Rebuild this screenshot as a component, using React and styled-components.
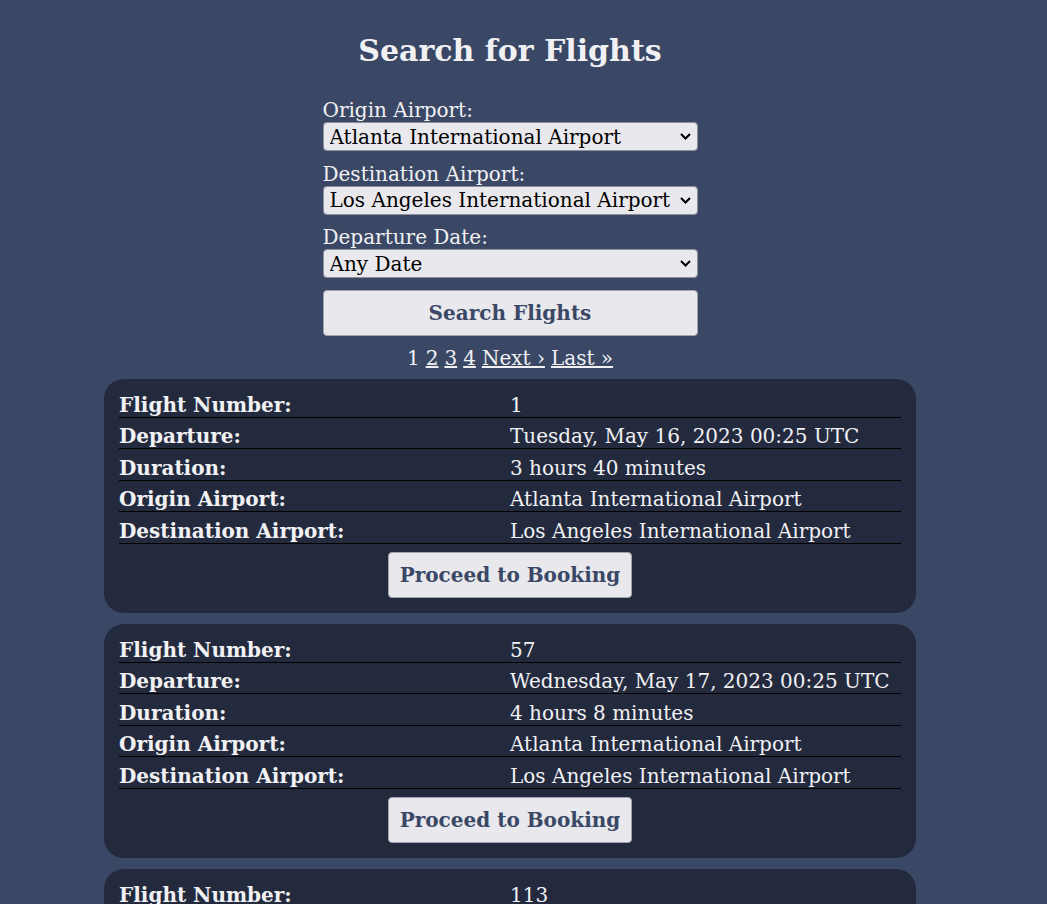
import React from 'react';
import styled, { createGlobalStyle } from 'styled-components';

const GlobalStyle = createGlobalStyle`
  html, body {
    margin: 0;
    background: #3a4866;
  }
  body {
    font-family: "DejaVu Serif", serif;
    color: #f1f1f4;
    font-size: 20px;
  }
`;

const flights = [
  {
    number: '1',
    departure: 'Tuesday, May 16, 2023 00:25 UTC',
    duration: '3 hours 40 minutes',
    origin: 'Atlanta International Airport',
    destination: 'Los Angeles International Airport',
  },
  {
    number: '57',
    departure: 'Wednesday, May 17, 2023 00:25 UTC',
    duration: '4 hours 8 minutes',
    origin: 'Atlanta International Airport',
    destination: 'Los Angeles International Airport',
  },
  {
    number: '113',
    departure: 'Thursday, May 18, 2023 00:25 UTC',
    duration: '3 hours 52 minutes',
    origin: 'Atlanta International Airport',
    destination: 'Los Angeles International Airport',
  },
];

function Dropdown({ value, label }) {
  return (
    <SelectWrap>
      <Select defaultValue={value}>
        <option value={value}>{label}</option>
      </Select>
      <Chevron width="11" height="7" viewBox="0 0 11 7">
        <path d="M1 1 L5.5 5.5 L10 1" fill="none" stroke="#000" strokeWidth="2" />
      </Chevron>
    </SelectWrap>
  );
}

function App() {
  return (
    <Page>
      <GlobalStyle />
      <Title>Search for Flights</Title>
      <Form>
        <Field>
          <Label>Origin Airport:</Label>
          <Dropdown value="atl" label="Atlanta International Airport" />
        </Field>
        <Field>
          <Label>Destination Airport:</Label>
          <Dropdown value="lax" label="Los Angeles International Airport" />
        </Field>
        <Field>
          <Label>Departure Date:</Label>
          <Dropdown value="any" label="Any Date" />
        </Field>
        <SearchButton>Search Flights</SearchButton>
      </Form>
      <Pager>
        <span>1</span>
        <PageLink href="#">2</PageLink>
        <PageLink href="#">3</PageLink>
        <PageLink href="#">4</PageLink>
        <PageLink href="#">Next ›</PageLink>
        <PageLink href="#">Last »</PageLink>
      </Pager>
      <List>
        {flights.map((f) => (
          <Card key={f.number}>
            <Rows>
              <Row><Key>Flight Number:</Key><Value>{f.number}</Value></Row>
              <Row><Key>Departure:</Key><Value>{f.departure}</Value></Row>
              <Row><Key>Duration:</Key><Value>{f.duration}</Value></Row>
              <Row><Key>Origin Airport:</Key><Value>{f.origin}</Value></Row>
              <Row><Key>Destination Airport:</Key><Value>{f.destination}</Value></Row>
            </Rows>
            <BookButton>Proceed to Booking</BookButton>
          </Card>
        ))}
      </List>
    </Page>
  );
}

const Page = styled.div`
  width: 1020px;
  display: flex;
  flex-direction: column;
  align-items: center;
  padding-top: 33px;
`;

const Title = styled.h1`
  margin: 0 0 30px;
  font-size: 30px;
  line-height: 36px;
  font-weight: bold;
`;

const Form = styled.div`
  width: 375px;
  display: flex;
  flex-direction: column;
  gap: 11.5px;
`;

const Field = styled.label`
  display: flex;
  flex-direction: column;
`;

const Label = styled.span`
  line-height: 23px;
`;

const SelectWrap = styled.div`
  position: relative;
  display: flex;
`;

const Select = styled.select`
  appearance: none;
  height: 29px;
  width: 375px;
  font-family: "DejaVu Serif", serif;
  font-size: 20px;
  color: #000;
  background-color: #e9e8ed;
  border: 1px solid #8f8f9b;
  border-radius: 4px;
  padding: 0 20px 0 6px;
`;

const Chevron = styled.svg`
  position: absolute;
  right: 7px;
  top: 11px;
  pointer-events: none;
`;

const SearchButton = styled.button`
  height: 46px;
  font-family: "DejaVu Serif", serif;
  font-size: 20px;
  font-weight: bold;
  color: #3a4866;
  background: #e9e8ed;
  border: 1px solid #a4a4ae;
  border-radius: 4px;
`;

const Pager = styled.div`
  margin-top: 11px;
  display: flex;
  gap: 6px;
  line-height: 23px;
`;

const PageLink = styled.a`
  color: #f1f1f4;
  text-decoration: underline;
`;

const List = styled.div`
  margin-top: 9px;
  width: 812px;
  display: flex;
  flex-direction: column;
  gap: 11px;
`;

const Card = styled.div`
  background: #232a3e;
  border-radius: 20px;
  padding: 15px;
  display: flex;
  flex-direction: column;
  align-items: center;
`;

const Rows = styled.div`
  width: 100%;
  display: flex;
  flex-direction: column;
  gap: 7.5px;
`;

const Row = styled.div`
  display: grid;
  grid-template-columns: 1fr 1fr;
  border-bottom: 1px solid #000;
  line-height: 23px;
`;

const Key = styled.span`
  font-weight: bold;
`;

const Value = styled.span``;

const BookButton = styled.button`
  margin-top: 8px;
  height: 46px;
  padding: 0 11px;
  font-family: "DejaVu Serif", serif;
  font-size: 20px;
  font-weight: bold;
  color: #3a4866;
  background: #e9e8ed;
  border: 1px solid #a4a4ae;
  border-radius: 4px;
`;

export default App;
